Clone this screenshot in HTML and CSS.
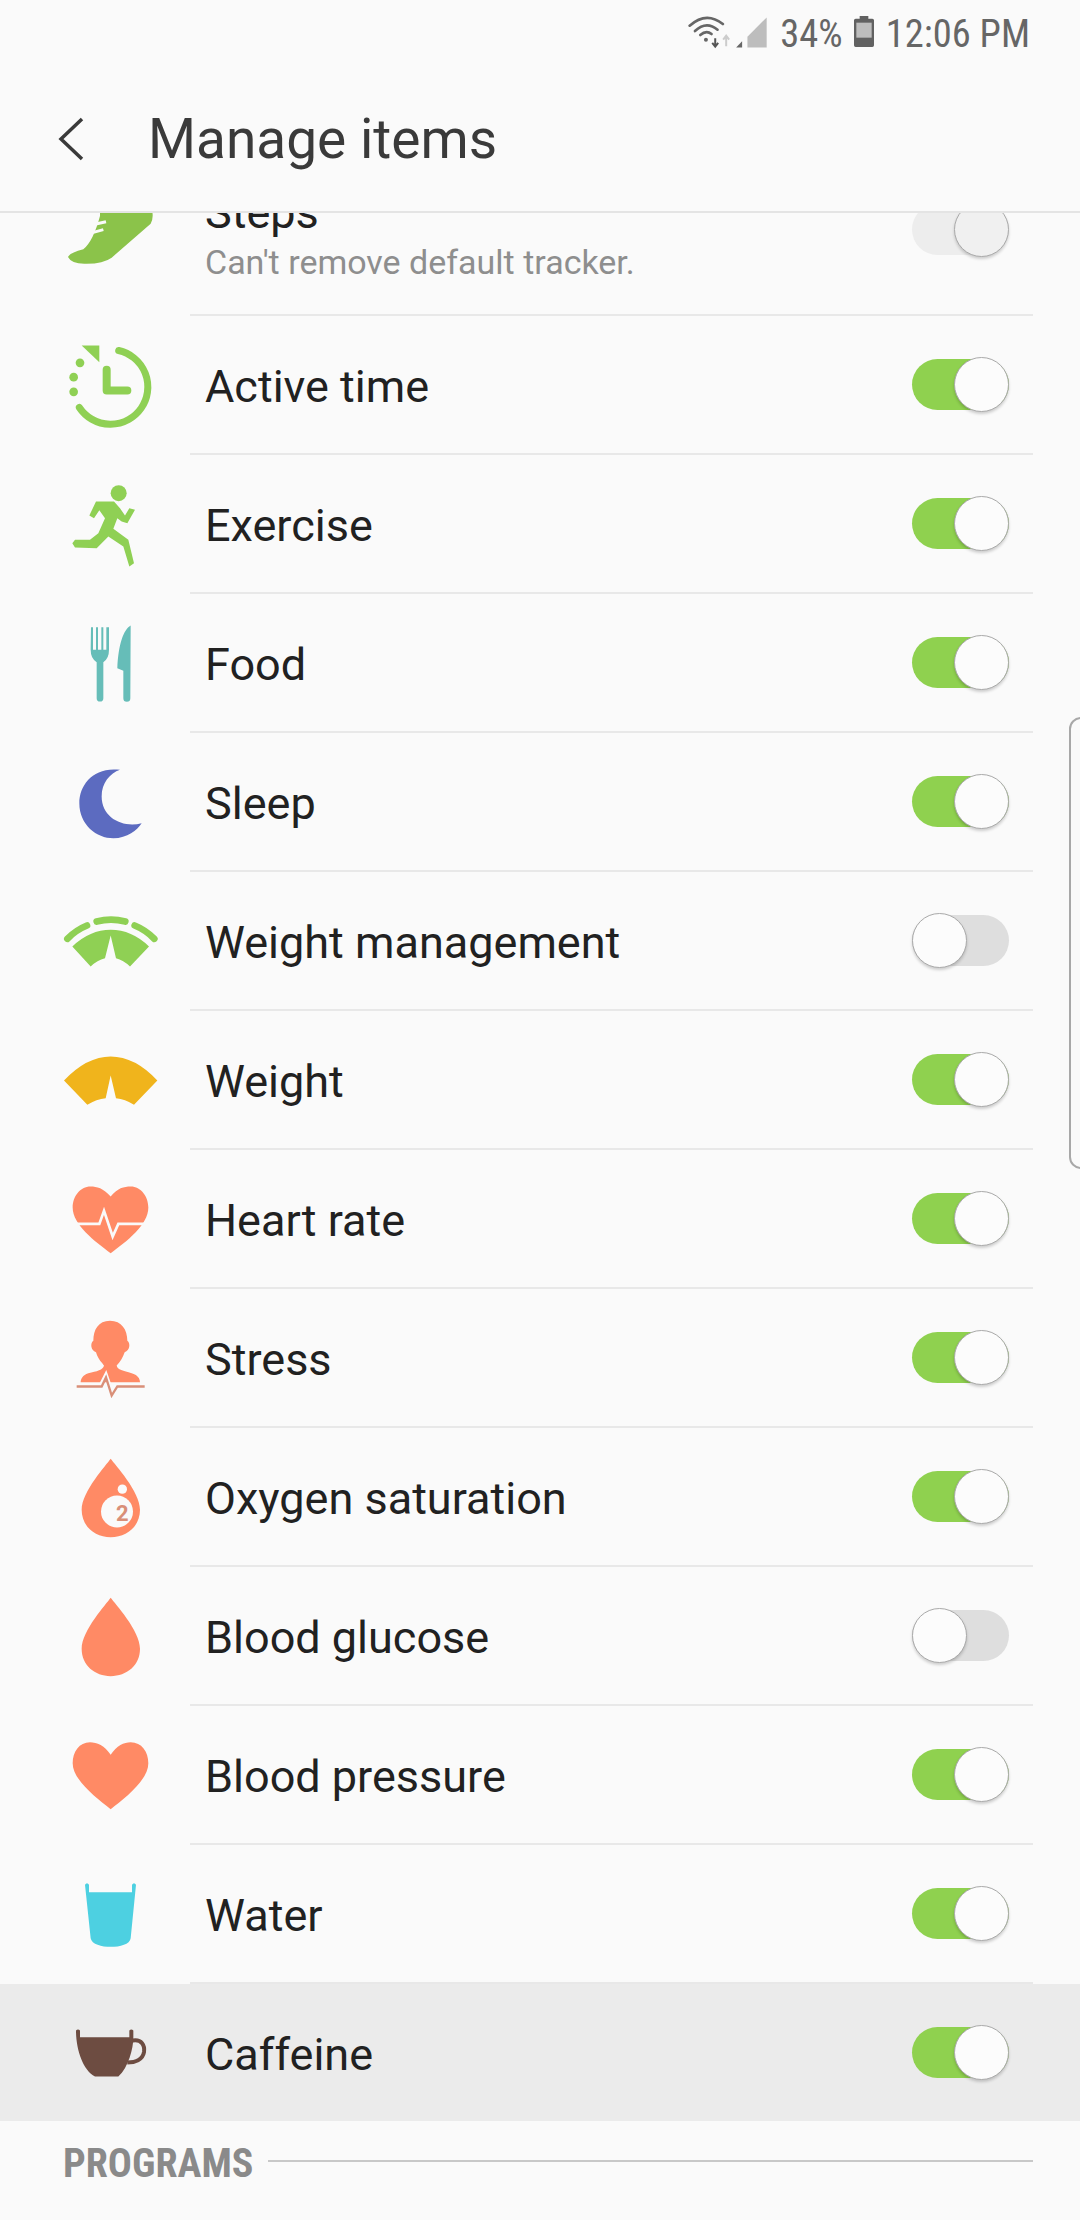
FILE: index.html
```html
<!DOCTYPE html>
<html lang="en">
<head>
  <meta charset="UTF-8" />
  <meta name="viewport" content="width=device-width, initial-scale=1.0" />
  <title>Manage items</title>
  <link rel="stylesheet" href="styles.css">
</head>
<body>
<div class="screen">

  <header class="top">
    <div class="status">
      <svg class="status-net" viewBox="20 25 250 105" width="83" height="35">
        <g fill="none" stroke="#666" stroke-width="8" stroke-linecap="round">
          <path d="M28 60Q78 15 128 55" />
          <path d="M44 76Q78 44 112 72" />
          <path d="M60 88Q78 72 94 85" />
        </g>
        <circle cx="77" cy="102" r="6" fill="#666" />
        <path d="M105 98V122M96 112L105 123L114 112" fill="none" stroke="#555" stroke-width="6" />
        <path d="M138 122V92M129 102L138 90L147 102" fill="none" stroke="#ccc" stroke-width="6" />
        <path d="M186 107V126H168Z" fill="#666" />
        <path d="M260 35V126H202V93Z" fill="#bdbdbd" />
      </svg>
      <span class="status-text pct">34%</span>
      <svg class="status-batt" viewBox="0 0 60 93" width="20" height="31">
        <path d="M17 0H43V8H55Q60 8 60 13V88Q60 93 55 93H5Q0 93 0 88V13Q0 8 5 8H17Z" fill="#616161" />
        <rect x="7" y="20" width="46" height="45" fill="#bdbdbd" />
      </svg>
      <span class="status-text">12:06 PM</span>
    </div>
    <div class="toolbar">
      <svg class="back" viewBox="0 0 28 44" width="28" height="44">
        <path d="M24 2L3 22L24 42" fill="none" stroke="#3a3a3a" stroke-width="3.5" />
      </svg>
      <h1>Manage items</h1>
    </div>
  </header>

  <ul class="list">
    <li class="row row-steps">
      <svg class="icon" viewBox="66 -24 288 288">
        <path d="M180 40L330 40Q345 75 332 98L215 200Q190 218 140 218Q95 220 84 198Q90 185 130 175Q160 150 180 75Z" fill="#8bc34a" />
        <path d="M164 100L198 92M160 124L190 116" stroke="#fafafa" stroke-width="9" />
      </svg>
      <div class="row-body">
        <div class="row-text">
          <div class="label">Steps</div>
          <div class="sub">Can't remove default tracker.</div>
        </div>
        <div class="toggle locked"><span class="thumb"></span></div>
      </div>
    </li>

    <li class="row">
      <svg class="icon" viewBox="66 49.5 288 288">
        <g fill="none" stroke="#8fd054" stroke-linecap="round">
          <path d="M236 87A112 112 0 1 1 118 258" stroke-width="21" />
          <path d="M200 145V207H262" stroke-width="24" stroke-linejoin="round" />
        </g>
        <g fill="#8fd054">
          <path d="M125 72H178V122Z" />
          <circle cx="120" cy="124" r="13" />
          <circle cx="101" cy="167" r="13" />
          <circle cx="101" cy="211" r="13" />
        </g>
      </svg>
      <div class="row-body"><div class="label">Active time</div><div class="toggle on"><span class="thumb"></span></div></div>
    </li>

    <li class="row">
      <svg class="icon" viewBox="66 466.5 288 288">
        <g fill="#8fd054">
          <circle cx="236" cy="515" r="24" />
          <path d="M168 540L222 540L240 560L255 582L268 560L285 565L262 605L245 600L232 590L220 622L265 655L282 725L268 735L250 675L205 645L170 680L105 678L97 665L105 655L150 655L175 635L195 590L178 566L162 590L148 582Z" />
        </g>
      </svg>
      <div class="row-body"><div class="label">Exercise</div><div class="toggle on"><span class="thumb"></span></div></div>
    </li>

    <li class="row">
      <svg class="icon" viewBox="66 883.5 288 288">
        <path d="M153 917H159V985H168V917H174V985H184V917H190V985H199V917H207V985Q207 1012 190 1022V1130A10 10 0 0 1 170 1130V1022Q152 1012 152 985Z" fill="#66bdb8" />
        <path d="M272 912C250 925 235 970 232 1040L250 1048V1130A10.500 10.500 0 0 0 271 1130Z" fill="#66bdb8" />
      </svg>
      <div class="row-body"><div class="label">Food</div><div class="toggle on"><span class="thumb"></span></div></div>
    </li>

    <li class="row">
      <svg class="icon" viewBox="66 1300.500 288 288">
        <path d="M240 1345C160 1335 118 1390 118 1445C118 1510 170 1550 220 1550C262 1550 292 1525 305 1505C250 1520 185 1490 185 1425C185 1385 210 1355 240 1345Z" fill="#5c6bc0" />
      </svg>
      <div class="row-body"><div class="label">Sleep</div><div class="toggle on"><span class="thumb"></span></div></div>
    </li>

    <li class="row">
      <svg class="icon" viewBox="66 97.500 288 288">
        <g fill="none" stroke="#8fd054" stroke-width="20" stroke-linecap="round">
          <path d="M82 232A172 172 0 0 1 141 192" />
          <path d="M170 180A172 172 0 0 1 256 180" />
          <path d="M284 192A172 172 0 0 1 343 232" />
        </g>
        <path d="M97 255Q150 205 212 205Q275 205 327 255L270 315Q250 295 228 290L212 222L195 290Q172 295 152 315Z" fill="#8fd054" />
      </svg>
      <div class="row-body"><div class="label">Weight management</div><div class="toggle off"><span class="thumb"></span></div></div>
    </li>

    <li class="row">
      <svg class="icon" viewBox="66 514.500 288 288">
        <path d="M72 657Q140 585 212 585Q285 585 352 657L282 730Q255 712 228 710L212 642L197 710Q170 712 142 730Z" fill="#f0b41c" />
      </svg>
      <div class="row-body"><div class="label">Weight</div><div class="toggle on"><span class="thumb"></span></div></div>
    </li>

    <li class="row">
      <svg class="icon" viewBox="66 931.500 288 288">
        <path d="M212 1005C190 980 170 975 152 975C120 975 98 1005 98 1038C98 1090 165 1140 212 1175C260 1140 325 1090 325 1038C325 1005 303 975 272 975C252 975 232 980 212 1005Z" fill="#ff8a65" />
        <path d="M96 1087H178L192 1048L218 1125L235 1087H328" fill="none" stroke="#fafafa" stroke-width="8" />
      </svg>
      <div class="row-body"><div class="label">Heart rate</div><div class="toggle on"><span class="thumb"></span></div></div>
    </li>

    <li class="row">
      <svg class="icon" viewBox="66 28.500 288 288">
        <path d="M210 58C175 58 160 85 160 118C150 125 152 148 168 152C175 175 188 185 192 192C190 205 170 210 145 215C128 220 122 232 122 242H300C300 230 292 220 275 215C250 208 232 205 230 192C240 180 248 170 254 152C270 148 272 125 262 118C262 85 245 58 210 58Z" fill="#ff8a65" />
        <path d="M116 250H182L198 218L216 270L232 250H306" fill="none" stroke="#fafafa" stroke-width="10" />
        <path d="M110 255H185L198 228L215 282L232 255H314" fill="none" stroke="#d98f78" stroke-width="7" />
      </svg>
      <div class="row-body"><div class="label">Stress</div><div class="toggle on"><span class="thumb"></span></div></div>
    </li>

    <li class="row">
      <svg class="icon" viewBox="66 145.500 288 288">
        <path d="M212 172C200 190 125 270 125 325C125 375 165 407 212 407C260 407 300 375 300 325C300 270 225 190 212 172Z" fill="#ff8a65" />
        <circle cx="231" cy="330" r="48" fill="#fafafa" />
        <circle cx="247" cy="263" r="14" fill="#fafafa" />
        <text class="drop-num" x="228" y="358">2</text>
      </svg>
      <div class="row-body"><div class="label">Oxygen saturation</div><div class="toggle on"><span class="thumb"></span></div></div>
    </li>

    <li class="row">
      <svg class="icon" viewBox="66 145.500 288 288">
        <path d="M212 172C200 190 125 270 125 325C125 375 165 407 212 407C260 407 300 375 300 325C300 270 225 190 212 172Z" fill="#ff8a65" />
      </svg>
      <div class="row-body"><div class="label">Blood glucose</div><div class="toggle off"><span class="thumb"></span></div></div>
    </li>

    <li class="row">
      <svg class="icon" viewBox="66 19.500 288 288">
        <path d="M212 100C195 72 170 62 150 62C118 62 98 90 98 125C98 175 170 230 212 263C255 230 325 175 325 125C325 90 305 62 272 62C252 62 230 72 212 100Z" fill="#ff8a65" />
      </svg>
      <div class="row-body"><div class="label">Blood pressure</div><div class="toggle on"><span class="thumb"></span></div></div>
    </li>

    <li class="row">
      <svg class="icon" viewBox="66 436.500 288 288">
        <path d="M135 490Q141 480 147 490V512H276V490Q282 480 288 490L272 650C270 668 240 676 212 676C185 676 155 668 152 650Z" fill="#4dd0e1" />
      </svg>
      <div class="row-body"><div class="label">Water</div><div class="toggle on"><span class="thumb"></span></div></div>
    </li>

    <li class="row row-active">
      <svg class="icon" viewBox="66 853.500 288 288">
        <path d="M108 930Q114 924 120 930V950H268V930Q274 924 280 930V950C280 985 265 1040 235 1068H165C130 1050 108 990 108 930Z" fill="#6d4c41" />
        <path d="M278 960C305 955 315 975 312 995C308 1018 285 1026 262 1026" fill="none" stroke="#6d4c41" stroke-width="12" />
      </svg>
      <div class="row-body"><div class="label">Caffeine</div><div class="toggle on"><span class="thumb"></span></div></div>
    </li>
  </ul>

  <div class="section">
    <span class="section-title">PROGRAMS</span>
    <span class="section-line"></span>
  </div>

  <div class="edge-handle"></div>
</div>
</body>
</html>
```

FILE: styles.css
```css
* {
  box-sizing: border-box;
}
body {
  margin: 0;
  background-color: #fafafa;
  font-family: Roboto, "Liberation Sans", sans-serif;
  color: #212121;
}
.screen {
  position: relative;
  width: 1080px;
  height: 2220px;
  overflow: hidden;
}

/* status bar + title */
.top {
  height: 213px;
  border-bottom: 2px solid #e4e4e4;
}
.status {
  height: 66px;
  padding-right: 50px;
  display: flex;
  justify-content: flex-end;
  align-items: center;
  color: #666;
}
.status svg {
  margin-bottom: 4px;
}
.status-net {
  margin-right: 10px;
}
.status-text {
  margin-top: 2px;
  font-size: 38.500px;
  font-stretch: 80%;
  line-height: 1;
}
.pct {
  margin-right: 11px;
}
.status-batt {
  margin-right: 12px;
}
.toolbar {
  height: 145px;
  padding-left: 58px;
  display: flex;
  align-items: center;
}
.back {
  margin-right: 62px;
}
h1 {
  margin: 0;
  font-size: 55px;
  font-weight: 400;
  color: #3a3a3a;
}

/* list */
.list {
  list-style: none;
  margin: 0;
  padding: 0;
  overflow: hidden;
  height: 1908px;
}
.row {
  display: flex;
  height: 139px;
}
.row-steps {
  height: 171px;
  margin-top: -68px;
}
.row-active {
  height: 137px;
  background-color: #ebebeb;
}
.row-active .row-body {
  border-bottom: 0;
}
.icon {
  width: 96px;
  height: 96px;
  margin: auto 32px auto 62px;
  flex: none;
}
.row-body {
  width: 843px;
  padding: 0 24px 0 15px;
  display: flex;
  align-items: center;
  justify-content: space-between;
  border-bottom: 2px solid #e8e8e8;
}
.label {
  font-size: 45px;
}
.row-body > .label {
  margin-top: 4px;
}
.row-text {
  margin-top: 9px;
}
.sub {
  margin-top: 3px;
  font-size: 34px;
  color: #8e8e8e;
}

/* switch */
.toggle {
  position: relative;
  width: 97px;
  height: 51px;
  border-radius: 26px;
  flex: none;
}
.toggle.on {
  background-color: #8fd14f;
}
.toggle.off {
  background-color: #dedede;
}
.toggle.locked {
  background-color: #ededed;
}
.thumb {
  position: absolute;
  top: -2px;
  right: 0;
  width: 55px;
  height: 55px;
  border-radius: 50%;
  background-color: #fcfcfc;
  border: 1.500px solid #aaa;
  box-shadow: 0 2px 3px rgba(0, 0, 0, 0.18);
}
.toggle.off .thumb {
  left: 0;
  right: auto;
}
.toggle.locked .thumb {
  background-color: #f0f0f0;
}
.drop-num {
  font-size: 66px;
  font-weight: 700;
  fill: #d98f78;
}

/* section */
.section {
  height: 80px;
  padding: 0 47px 0 63px;
  display: flex;
  align-items: center;
}
.section-title {
  margin-top: 4px;
  font-size: 40px;
  font-weight: 700;
  font-stretch: 80%;
  color: #8a8a8a;
}
.section-line {
  flex: 1;
  height: 2px;
  margin-left: 15px;
  background-color: #c8c8c8;
}

.edge-handle {
  position: absolute;
  top: 717px;
  right: -4px;
  width: 15px;
  height: 452px;
  border: 2px solid #a8a8a8;
  border-radius: 12px 0 0 12px;
}
```
